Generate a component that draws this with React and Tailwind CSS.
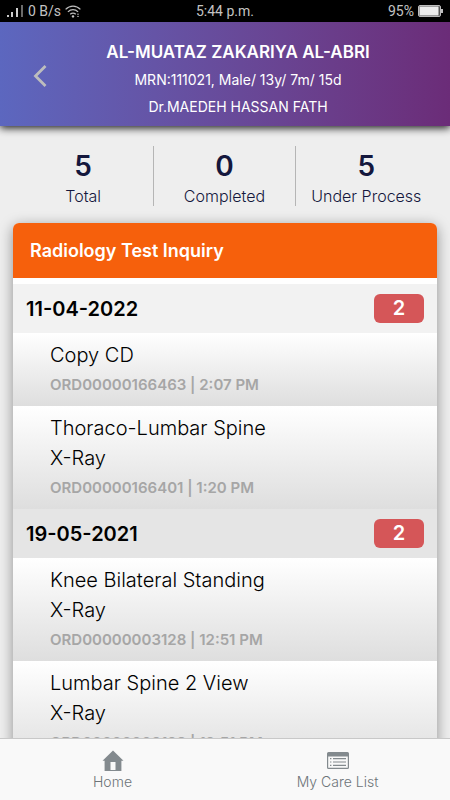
import React from "react";

const stats = [
  { label: "Total", value: 5 },
  { label: "Completed", value: 0 },
  { label: "Under Process", value: 5 }
];

const groups = [
  {
    date: "11-04-2022",
    headerBg: "bg-[#f2f2f2]",
    tests: [
      { name: "Copy CD", order: "ORD00000166463", time: "2:07 PM" },
      { name: "Thoraco-Lumbar Spine", type: "X-Ray", order: "ORD00000166401", time: "1:20 PM" }
    ]
  },
  {
    date: "19-05-2021",
    headerBg: "bg-[#e5e5e5]",
    tests: [
      { name: "Knee Bilateral Standing", type: "X-Ray", order: "ORD00000003128", time: "12:51 PM" },
      { name: "Lumbar Spine 2 View", type: "X-Ray", order: "ORD00000003129", time: "12:51 PM" }
    ]
  }
];

function SignalIcon() {
  return (
    <svg width="17" height="14" viewBox="0 0 17 14" fill="#cfcfcf">
      <rect x="0" y="11" width="2" height="2" />
      <rect x="4" y="8" width="2" height="5" />
      <rect x="9" y="4" width="2" height="9" />
      <rect x="14" y="1" width="2" height="12" fill="#6b6b6b" />
    </svg>
  );
}

function WifiIcon() {
  return (
    <svg width="16" height="13" viewBox="0 0 16 13" fill="none" stroke="#bdbdbd" strokeWidth="1.3">
      <path d="M0.6 4.4C4.8 0 11.2 0 15.4 4.4" />
      <path d="M2.9 6.9C5.9 3.9 10.1 3.9 13.1 6.9" />
      <path d="M5.2 9.3C7 7.7 9 7.7 10.8 9.3" />
      <circle cx="8" cy="11.4" r="1.2" fill="#cfcfcf" stroke="none" />
      <path d="M12.2 9.2h1.6M12.2 11.4h1.6" strokeWidth="1" />
    </svg>
  );
}

function BatteryIcon() {
  return (
    <svg width="25" height="12" viewBox="0 0 25 12">
      <rect x="0.5" y="0.5" width="22" height="11" rx="1.5" fill="#555" stroke="#bdbdbd" />
      <rect x="1.5" y="1.5" width="19" height="9" fill="#ececec" />
      <rect x="23" y="4" width="2" height="4" fill="#bdbdbd" />
    </svg>
  );
}

function BackIcon() {
  return (
    <svg width="14" height="22" viewBox="0 0 14 22" fill="none" stroke="currentColor" strokeWidth="2.8">
      <path d="M12.5 1L2.5 11L12.5 21" />
    </svg>
  );
}

function HomeIcon() {
  return (
    <svg width="22" height="22" viewBox="0 0 22 22" fill="#838a8e">
      <path fillRule="evenodd" d="M11 0.5L0.5 10.8H2.6V21H19.4V10.8H21.5ZM8.5 12H13.5V20H8.5Z" />
    </svg>
  );
}

function ListIcon() {
  return (
    <svg width="22" height="22" viewBox="0 0 22 22" fill="#838a8e">
      <path
        fillRule="evenodd"
        d="M1.5 2H20.5Q22 2 22 3.5V17.5Q22 19 20.5 19H1.5Q0 19 0 17.5V3.5Q0 2 1.5 2ZM1.2 6.5V17.8H20.8V6.5Z"
      />
      <path d="M3 8H4.4V9.2H3ZM3 11.4H4.4V12.6H3ZM3 14.8H4.4V16H3ZM6 8H19V9.2H6ZM6 11.4H19V12.6H6ZM6 14.8H19V16H6Z" />
    </svg>
  );
}

function StatusBar() {
  return (
    <div className="grid h-[22px] flex-none grid-cols-3 items-center bg-black px-[7px] font-[Roboto,sans-serif] text-sm text-[#c4c4c4]">
      <div className="flex items-center gap-1">
        <SignalIcon />
        <span>0 B/s</span>
        <WifiIcon />
      </div>
      <span className="text-center">5:44 p.m.</span>
      <div className="flex items-center justify-end gap-1">
        <span>95%</span>
        <BatteryIcon />
      </div>
    </div>
  );
}

function TestRow({ test }) {
  return (
    <li className="bg-linear-to-b from-white to-[#dedede] pt-[7px] pr-40 pb-[6px] pl-[37px]">
      <h3 className="text-xl leading-[30px] font-light text-black">
        {test.name} {test.type && <span className="whitespace-nowrap">{test.type}</span>}
      </h3>
      <p className="text-[15px] leading-[30px] font-semibold whitespace-nowrap text-[#a6a6a6]">
        {test.order} | {test.time}
      </p>
    </li>
  );
}

export default function App() {
  return (
    <div className="flex h-screen flex-col overflow-hidden bg-[#eee] font-[Inter,sans-serif]">
      <StatusBar />

      {/* Patient header */}
      <header className="relative z-10 flex flex-none items-center bg-linear-to-r from-[#5c67bf] to-[#6b2c78] pt-[17px] pb-[6px] text-white shadow-[0_2px_8px_rgba(0,0,0,0.9)]">
        <button type="button" aria-label="Back" className="flex w-20 flex-none justify-center pb-2 text-[#bdbdbd]">
          <BackIcon />
        </button>
        <div className="-ml-20 flex-1 pl-[26px] text-center">
          <h1 className="text-[17px] leading-[27px] font-semibold">AL-MUATAZ ZAKARIYA AL-ABRI</h1>
          <p className="text-sm leading-[27px]">MRN:111021, Male/ 13y/ 7m/ 15d</p>
          <p className="text-sm leading-[27px]">Dr.MAEDEH HASSAN FATH</p>
        </div>
      </header>

      <main className="min-h-0 flex-1 overflow-hidden px-[13px] pt-5">
        <dl className="grid grid-cols-3 divide-x divide-[#b5b5b5] text-center text-[#14173d]">
          {stats.map(stat => (
            <div key={stat.label} className="flex h-[60px] flex-col-reverse">
              <dt className="text-base leading-5 font-light whitespace-nowrap">{stat.label}</dt>
              <dd className="text-[28px] leading-10 font-semibold">{stat.value}</dd>
            </div>
          ))}
        </dl>

        {/* Test list */}
        <section className="mt-[17px] overflow-hidden rounded-t-md bg-white shadow-[0_3px_14px_rgba(0,0,0,0.4)]">
          <h2 className="mb-[6px] bg-[#f6600c] px-[17px] text-lg leading-[55px] font-semibold text-white">
            Radiology Test Inquiry
          </h2>
          {groups.map(group => (
            <div key={group.date}>
              <div className={`flex h-[49px] items-center justify-between px-[13px] ${group.headerBg}`}>
                <span className="text-xl font-semibold text-black">{group.date}</span>
                <span className="w-[50px] rounded-md bg-[#d55658] text-center text-xl leading-[29px] font-semibold text-white">
                  {group.tests.length}
                </span>
              </div>
              <ul>
                {group.tests.map(test => (
                  <TestRow key={test.order} test={test} />
                ))}
              </ul>
            </div>
          ))}
        </section>
      </main>

      <nav className="relative z-10 grid flex-none grid-cols-2 border-t border-[#c8c8c8] bg-[#f9f9f9] pt-[11px] pb-2 text-sm font-light text-[#6d7478]">
        <a href="#home" className="flex flex-col items-center">
          <HomeIcon />
          <span>Home</span>
        </a>
        <a href="#care-list" className="flex flex-col items-center">
          <ListIcon />
          <span>My Care List</span>
        </a>
      </nav>
    </div>
  );
}
